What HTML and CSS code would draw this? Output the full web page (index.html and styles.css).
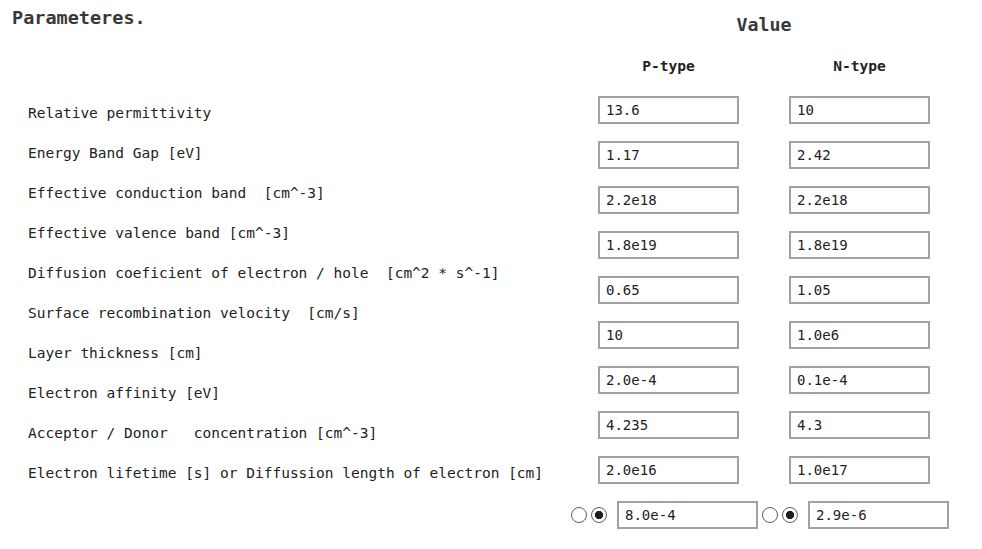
FILE: index.html
```html
<!DOCTYPE html>
<html>
<head>
<meta charset="utf-8">
<link rel="stylesheet" href="styles.css">
</head>
<body>
<div class="page">
  <div class="left">
    <div class="title">Parameteres.</div>
    <ul class="labels">
      <li>Relative permittivity</li>
      <li>Energy Band Gap [eV]</li>
      <li>Effective conduction band&nbsp; [cm^-3]</li>
      <li>Effective valence band [cm^-3]</li>
      <li>Diffusion coeficient of electron / hole&nbsp; [cm^2 * s^-1]</li>
      <li>Surface recombination velocity&nbsp; [cm/s]</li>
      <li>Layer thickness [cm]</li>
      <li>Electron affinity [eV]</li>
      <li>Acceptor / Donor&nbsp;&nbsp; concentration [cm^-3]</li>
      <li>Electron lifetime [s] or Diffussion length of electron [cm]</li>
    </ul>
  </div>
  <div class="right">
    <div class="value">Value</div>
    <div class="grid">
      <div class="sub">P-type</div>
      <div class="sub">N-type</div>
      <input class="field" type="text" value="13.6">
      <input class="field" type="text" value="10">
      <input class="field" type="text" value="1.17">
      <input class="field" type="text" value="2.42">
      <input class="field" type="text" value="2.2e18">
      <input class="field" type="text" value="2.2e18">
      <input class="field" type="text" value="1.8e19">
      <input class="field" type="text" value="1.8e19">
      <input class="field" type="text" value="0.65">
      <input class="field" type="text" value="1.05">
      <input class="field" type="text" value="10">
      <input class="field" type="text" value="1.0e6">
      <input class="field" type="text" value="2.0e-4">
      <input class="field" type="text" value="0.1e-4">
      <input class="field" type="text" value="4.235">
      <input class="field" type="text" value="4.3">
      <input class="field" type="text" value="2.0e16">
      <input class="field" type="text" value="1.0e17">
      <div class="choice">
        <input class="radio" type="radio" name="p">
        <input class="radio" type="radio" name="p" checked>
        <input class="field" type="text" value="8.0e-4">
      </div>
      <div class="choice">
        <input class="radio" type="radio" name="n">
        <input class="radio" type="radio" name="n" checked>
        <input class="field" type="text" value="2.9e-6">
      </div>
    </div>
  </div>
</div>
</body>
</html>
```
FILE: styles.css
```css
html, body {
  margin: 0;
  padding: 0;
  background: #ffffff;
}
body {
  font-family: "DejaVu Sans Mono", "Liberation Mono", monospace;
  color: #222222;
}
.page {
  display: flex;
  padding: 6px 0 0 12px;
}
.left {
  width: 586px;
  flex: none;
}
.title {
  font-size: 18.5px;
  font-weight: bold;
  line-height: 24px;
  color: #383838;
}
.labels {
  list-style: none;
  margin: 63px 0 0 0;
  padding: 0 0 0 16px;
}
.labels li {
  font-size: 14.5px;
  line-height: 40px;
  height: 40px;
  white-space: nowrap;
}
.right {
  flex: none;
}
.value {
  width: 332px;
  text-align: center;
  font-size: 18.3px;
  font-weight: bold;
  line-height: 24px;
  margin-top: 7px;
  color: #383838;
}
.grid {
  display: grid;
  grid-template-columns: 141px 141px;
  column-gap: 50px;
  row-gap: 17px;
  margin-top: 19px;
}
.sub {
  text-align: center;
  font-size: 14.6px;
  font-weight: bold;
  line-height: 20px;
  margin-bottom: 3px;
}
.field {
  box-sizing: border-box;
  width: 141px;
  height: 28px;
  margin: 0;
  padding: 0 6px;
  border: 2px solid #a2a2a2;
  border-radius: 0;
  background: #ffffff;
  font-family: "DejaVu Sans Mono", "Liberation Mono", monospace;
  font-size: 14px;
  color: #222222;
  outline: none;
}
.choice {
  display: flex;
  align-items: center;
  margin-left: -27px;
}
.radio {
  appearance: none;
  -webkit-appearance: none;
  box-sizing: border-box;
  width: 16px;
  height: 16px;
  margin: 0 4px 0 0;
  border: 1.5px solid #5e5e5e;
  border-radius: 50%;
  background: #ffffff;
  flex: none;
}
.radio:checked {
  background: radial-gradient(circle, #1e1e1e 0 3.8px, #ffffff 4.4px);
}
.choice .field {
  margin-left: 6px;
}
```
